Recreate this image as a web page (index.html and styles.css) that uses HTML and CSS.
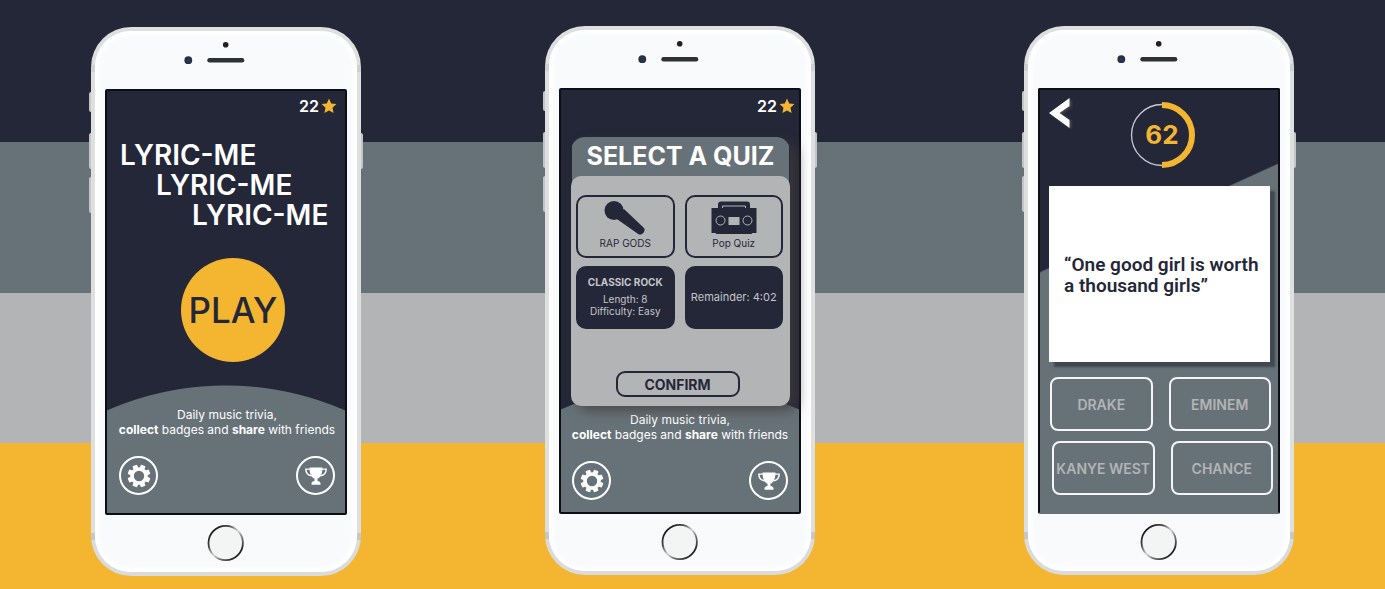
FILE: index.html
```html
<!DOCTYPE html>
<html lang="en">
<head>
<meta charset="utf-8">
<meta name="viewport" content="width=device-width, initial-scale=1">
<title>Lyric-Me</title>
<link rel="stylesheet" href="styles.css">
</head>
<body>
<svg class="defs" width="0" height="0" aria-hidden="true">
  <defs>
    <linearGradient id="ring" x1="0" y1="0" x2="1" y2="1">
      <stop offset="0.1" stop-color="#111"/>
      <stop offset="0.3" stop-color="#444"/>
      <stop offset="0.5" stop-color="#d4d4d4"/>
      <stop offset="0.65" stop-color="#777"/>
      <stop offset="0.85" stop-color="#222"/>
    </linearGradient>
    <symbol id="bezel-top" viewBox="0 0 242 58">
      <circle cx="120.7" cy="13.7" r="2.800" fill="#221f20"/>
      <circle cx="83.3" cy="29.2" r="3.9" fill="#2b303a"/>
      <circle cx="83.6" cy="29.4" r="2" fill="#20356b"/>
      <rect x="102.3" y="27" width="37" height="4.4" rx="2.2" fill="#2d312f"/>
    </symbol>
    <symbol id="bezel-bottom" viewBox="0 0 242 57">
      <circle cx="120.7" cy="28" r="17.2" fill="#f3f5f5" stroke="url(#ring)" stroke-width="1.8"/>
    </symbol>
    <symbol id="star" viewBox="0 0 16 16">
      <path d="M8 .6l2.2 4.9 5.2.6-3.9 3.6 1.1 5.3L8 12.4 3.4 15l1.1-5.3L.6 6.1l5.2-.6z" fill="#f4b530"/>
    </symbol>
    <symbol id="gear" viewBox="0 0 24 24">
      <g fill="#fff">
        <rect x="9.5" y=".6" width="5" height="5" rx="1" transform="rotate(22.5 12 12)"/>
        <rect x="9.5" y=".6" width="5" height="5" rx="1" transform="rotate(67.5 12 12)"/>
        <rect x="9.5" y=".6" width="5" height="5" rx="1" transform="rotate(112.5 12 12)"/>
        <rect x="9.5" y=".6" width="5" height="5" rx="1" transform="rotate(157.5 12 12)"/>
        <rect x="9.5" y=".6" width="5" height="5" rx="1" transform="rotate(202.5 12 12)"/>
        <rect x="9.5" y=".6" width="5" height="5" rx="1" transform="rotate(247.5 12 12)"/>
        <rect x="9.5" y=".6" width="5" height="5" rx="1" transform="rotate(292.5 12 12)"/>
        <rect x="9.5" y=".6" width="5" height="5" rx="1" transform="rotate(337.5 12 12)"/>
      </g>
      <circle cx="12" cy="12" r="7" fill="none" stroke="#fff" stroke-width="3.6"/>
    </symbol>
    <symbol id="trophy" viewBox="0 0 24 24">
      <path d="M5.6 3.500h12.8v.9c-.1 5.800-1.900 8.900-4.900 10.200v2.500c1.700.3 3 .9 3 2.300v1.300h-9v-1.300c0-1.400 1.300-2 3-2.300v-2.500C7.500 13.300 5.700 10.200 5.600 4.400z" fill="#fff"/>
      <path d="M6 5.100H1.800c0 3.600 2.100 6.300 5.700 6.600M18 5.100h4.200c0 3.600-2.100 6.300-5.700 6.600" fill="none" stroke="#fff" stroke-width="1.400"/>
    </symbol>
  </defs>
</svg>

<main class="showcase">
  <section class="phone phone-home" aria-label="Home screen">
    <i class="key key-mute"></i><i class="key key-up"></i><i class="key key-down"></i><i class="key key-power"></i>
    <div class="face">
      <svg class="bezel-top" aria-hidden="true"><use href="#bezel-top"/></svg>
      <div class="screen screen-hill">
        <p class="score">22<svg class="star" aria-hidden="true"><use href="#star"/></svg></p>
        <h1 class="logo"><span>LYRIC-ME</span><span>LYRIC-ME</span><span>LYRIC-ME</span></h1>
        <button class="play" type="button">PLAY</button>
        <div class="footer">
          <p class="tagline">Daily music trivia,<br><b>collect</b> badges and <b>share</b> with friends</p>
          <div class="tools">
            <button class="round" type="button" aria-label="Settings"><svg class="icon"><use href="#gear"/></svg></button>
            <button class="round" type="button" aria-label="Badges"><svg class="icon"><use href="#trophy"/></svg></button>
          </div>
        </div>
      </div>
      <svg class="bezel-bottom" aria-hidden="true"><use href="#bezel-bottom"/></svg>
    </div>
  </section>

  <section class="phone phone-select" aria-label="Quiz selection screen">
    <i class="key key-mute"></i><i class="key key-up"></i><i class="key key-down"></i><i class="key key-power"></i>
    <div class="face">
      <svg class="bezel-top" aria-hidden="true"><use href="#bezel-top"/></svg>
      <div class="screen screen-hill">
        <p class="score">22<svg class="star" aria-hidden="true"><use href="#star"/></svg></p>
        <div class="modal">
          <h2 class="modal-title">SELECT A QUIZ</h2>
          <div class="modal-body">
            <div class="quizzes">
              <button class="quiz" type="button">
                <svg class="quiz-icon" viewBox="0 0 48 36" aria-hidden="true">
                  <circle cx="13" cy="10.500" r="9.500" fill="#242738"/>
                  <path d="M13 17l10-8 19.500 18.600c1.500 1.400 1.400 3.200.2 4.900s-3.400 2.700-5.200 1.700z" fill="#242738"/>
                </svg>
                RAP GODS
              </button>
              <button class="quiz" type="button">
                <svg class="quiz-icon" viewBox="0 0 48 36" aria-hidden="true">
                  <path d="M9.500 9V4.500q0-1.500 1.500-1.500h26q1.500 0 1.500 1.500V9" fill="none" stroke="#242738" stroke-width="3"/>
                  <rect x="10" y="4" width="28" height="5" fill="#242738"/>
                  <path d="M12.500 8V6h23v2" fill="none" stroke="#b3b4b6" stroke-width="1"/>
                  <path d="M1.500 8h45v25h-4l-1 1H6.500l-1-1h-4z" fill="#242738"/>
                  <circle cx="10.500" cy="20.500" r="4.500" fill="none" stroke="#b3b4b6"/>
                  <circle cx="37.500" cy="20.500" r="4.500" fill="none" stroke="#b3b4b6"/>
                  <rect x="18.500" y="17" width="11" height="8" fill="#b3b4b6"/>
                </svg>
                Pop Quiz
              </button>
              <button class="quiz quiz-dark" type="button"><b>CLASSIC ROCK</b><span>Length: 8<br>Difficulty: Easy</span></button>
              <button class="quiz quiz-dark quiz-time" type="button">Remainder: 4:02</button>
            </div>
            <button class="confirm" type="button">CONFIRM</button>
          </div>
        </div>
        <div class="footer">
          <p class="tagline">Daily music trivia,<br><b>collect</b> badges and <b>share</b> with friends</p>
          <div class="tools">
            <button class="round" type="button" aria-label="Settings"><svg class="icon"><use href="#gear"/></svg></button>
            <button class="round" type="button" aria-label="Badges"><svg class="icon"><use href="#trophy"/></svg></button>
          </div>
        </div>
      </div>
      <svg class="bezel-bottom" aria-hidden="true"><use href="#bezel-bottom"/></svg>
    </div>
  </section>

  <section class="phone phone-quiz" aria-label="Question screen">
    <i class="key key-mute"></i><i class="key key-up"></i><i class="key key-down"></i><i class="key key-power"></i>
    <div class="face">
      <svg class="bezel-top" aria-hidden="true"><use href="#bezel-top"/></svg>
      <div class="screen screen-slope">
        <div class="quiz-head">
          <button class="back" type="button" aria-label="Back">
            <svg class="back-icon" viewBox="0 0 22 32" aria-hidden="true"><path d="M0 16L20.500 1v8L10.500 16l10 7v8z" fill="#fff"/></svg>
          </button>
          <div class="timer">
            <svg class="timer-ring" viewBox="0 0 66 66" aria-hidden="true">
              <path d="M33 2.500a30.500 30.500 0 0 0 0 61" fill="none" stroke="#c8c9ce" stroke-width="1.300"/>
              <path d="M33 3a30 30 0 0 1 0 60" fill="none" stroke="#f4b530" stroke-width="6"/>
            </svg>
            <span class="timer-value">62</span>
          </div>
        </div>
        <blockquote class="lyric">“One good girl is worth<br>a thousand girls”</blockquote>
        <div class="answers">
          <button class="answer" type="button">DRAKE</button>
          <button class="answer" type="button">EMINEM</button>
        </div>
        <div class="answers answers-last">
          <button class="answer" type="button">KANYE WEST</button>
          <button class="answer" type="button">CHANCE</button>
        </div>
      </div>
      <svg class="bezel-bottom" aria-hidden="true"><use href="#bezel-bottom"/></svg>
    </div>
  </section>
</main>
</body>
</html>
```

FILE: styles.css
```css
:root {
  --navy: #242738;
  --slate: #677278;
  --grey: #b3b4b6;
  --gold: #f4b530;
}

* {
  box-sizing: border-box;
}

body {
  margin: 0;
  min-height: 100vh;
  font-family: Inter, "Liberation Sans", sans-serif;
  color: #fff;
  background: linear-gradient(var(--navy) 24.1%, var(--slate) 24.1% 49.7%, var(--grey) 49.7% 75.2%, var(--gold) 75.2%);
}

h1, h2, p, blockquote {
  margin: 0;
}

button {
  padding: 0;
  border: 0;
  background: none;
  font: inherit;
  color: inherit;
  cursor: pointer;
}

svg {
  display: block;
}

.defs {
  position: absolute;
}

.showcase {
  display: grid;
  grid-template-columns: 270px 184fr 270px 209fr 270px;
  align-items: start;
  padding: 26px 91px 13px;
}

/* Phone body */
.phone {
  position: relative;
  padding: 4px;
  border-radius: 40px;
  background: linear-gradient(#dedfdf 38px, #cfd0d0 38px 45px, #dedfdf 45px 506px, #c6c7c7 506px 513px, #d9dbdc 513px);
}

.phone-home {
  grid-column: 1;
  margin-top: 1px;
}

.phone-select {
  grid-column: 3;
}

.phone-quiz {
  grid-column: 5;
}

.face {
  padding: 0 10px;
  border-radius: 36px;
  background: #f9fafc;
  box-shadow: inset 0 0 5px 4px #fff;
}

.bezel-top {
  width: 100%;
  height: 58px;
}

.bezel-bottom {
  width: 100%;
  height: 57px;
}

.key {
  position: absolute;
  left: -2px;
  width: 2px;
  height: 36px;
  border-radius: 2px 0 0 2px;
  background: #c3c5c7;
}

.key-mute {
  top: 65px;
  height: 20px;
}

.key-up {
  top: 106px;
}

.key-down {
  top: 150px;
}

.key-power {
  top: 106px;
  left: auto;
  right: -2px;
  border-radius: 0 2px 2px 0;
}

/* Screens */
.screen {
  position: relative;
  display: flex;
  flex-direction: column;
  min-height: 426px;
  border: 2px solid #0d0e14;
  border-radius: 2px;
}

.screen-hill {
  background: radial-gradient(circle at 50% 591px, var(--slate) 296px, var(--navy) 297px);
}

.screen-slope {
  padding: 0 7px 0 9px;
  border-bottom-color: var(--slate);
  background: linear-gradient(335.5deg, var(--slate) 65.5%, var(--navy) 65.8%);
}

.score {
  display: flex;
  align-items: center;
  justify-content: flex-end;
  gap: 2px;
  padding: 6px 8px 0 0;
  font-size: 16px;
  line-height: 18px;
  font-weight: 600;
}

.phone-select .score {
  padding: 7px 4px 0 0;
}

.star {
  width: 16px;
  height: 16px;
}

.logo {
  display: flex;
  flex-direction: column;
  margin-top: 25px;
  padding-left: 13px;
  font-size: 28px;
  line-height: 30px;
  font-weight: 600;
}

.logo span:nth-child(2) {
  padding-left: 36px;
}

.logo span:nth-child(3) {
  padding-left: 72px;
}

.play {
  align-self: center;
  width: 104px;
  height: 104px;
  margin: 28px 0 0 14px;
  border-radius: 50%;
  background: var(--gold);
  color: var(--navy);
  font-size: 35px;
  font-weight: 500;
}

.footer {
  margin-top: auto;
  padding: 0 10px 18px 12px;
}

.phone-select .footer {
  padding: 0 11px 12px;
}

.tagline {
  margin: 0 -10px;
  font-size: 12px;
  line-height: 15px;
  text-align: center;
  white-space: nowrap;
}

.tools {
  display: flex;
  justify-content: space-between;
  margin-top: 19px;
}

.round {
  display: grid;
  place-items: center;
  width: 39px;
  height: 39px;
  border: 2px solid #fff;
  border-radius: 50%;
}

.icon {
  width: 24px;
  height: 24px;
}

/* Quiz picker */
.modal {
  position: absolute;
  top: 47px;
  left: 10px;
  right: 9px;
  border-radius: 14px 14px 10px 10px;
  background: linear-gradient(var(--slate), var(--slate)) 1px 0 / 217px 60px no-repeat;
  box-shadow: 7px 5px 12px rgba(66, 58, 58, 0.7);
  z-index: 1;
}

.modal-title {
  font-size: 25px;
  line-height: 39px;
  font-weight: 700;
  text-align: center;
  white-space: nowrap;
}

.modal-body {
  display: flex;
  flex-direction: column;
  align-items: center;
  padding: 19px 7px 9px 5px;
  border-radius: 10px;
  background: var(--grey);
}

.quizzes {
  display: grid;
  grid-template-columns: 1fr 1fr;
  gap: 8px 10px;
  width: 100%;
}

.quiz {
  display: flex;
  flex-direction: column;
  align-items: center;
  height: 63px;
  padding-top: 3px;
  border: 2px solid var(--navy);
  border-radius: 10px;
  color: var(--navy);
  font-size: 10px;
  line-height: 14px;
  white-space: nowrap;
}

.quiz-icon {
  width: 48px;
  height: 36px;
}

.quiz-dark {
  padding-top: 8px;
  background: var(--navy);
  color: #c4c5c9;
  line-height: 12px;
}

.quiz-dark b {
  margin-bottom: 5px;
}

.quiz-time {
  padding-top: 23px;
  font-size: 11px;
}

.confirm {
  width: 124px;
  height: 26px;
  margin: 42px 4px 0 0;
  border: 2px solid var(--navy);
  border-radius: 9px;
  color: var(--navy);
  font-size: 14px;
  font-weight: 700;
}

/* Question */
.quiz-head {
  display: flex;
  align-items: flex-start;
  padding-top: 7px;
}

.back-icon {
  width: 22px;
  height: 32px;
  filter: drop-shadow(2px 1px 1px #4b4848);
}

.timer {
  display: grid;
  place-items: center;
  margin: 5px 0 0 58px;
}

.timer > * {
  grid-area: 1 / 1;
}

.timer-ring {
  width: 66px;
  height: 66px;
}

.timer-value {
  color: var(--gold);
  font-size: 26px;
  line-height: 32px;
  font-weight: 700;
}

.lyric {
  display: flex;
  flex-direction: column;
  justify-content: center;
  height: 176px;
  margin: 18px 1px 0 0;
  padding: 2px 0 0 15px;
  background: #fff;
  box-shadow: 5px 5px 2px #3f474f;
  color: var(--navy);
  font-family: Roboto, Inter, sans-serif;
  font-size: 19px;
  line-height: 21px;
  font-weight: 600;
  white-space: nowrap;
}

.answers {
  display: grid;
  grid-template-columns: 1fr 1fr;
  gap: 16px;
  margin: 15px 0 0 1px;
}

.answers-last {
  margin: 10px -2px 0 3px;
}

.answer {
  height: 54px;
  border: 2px solid #f4f5f6;
  border-radius: 8px;
  color: #b3b4b6;
  font-size: 14px;
  font-weight: 600;
  white-space: nowrap;
}
```
